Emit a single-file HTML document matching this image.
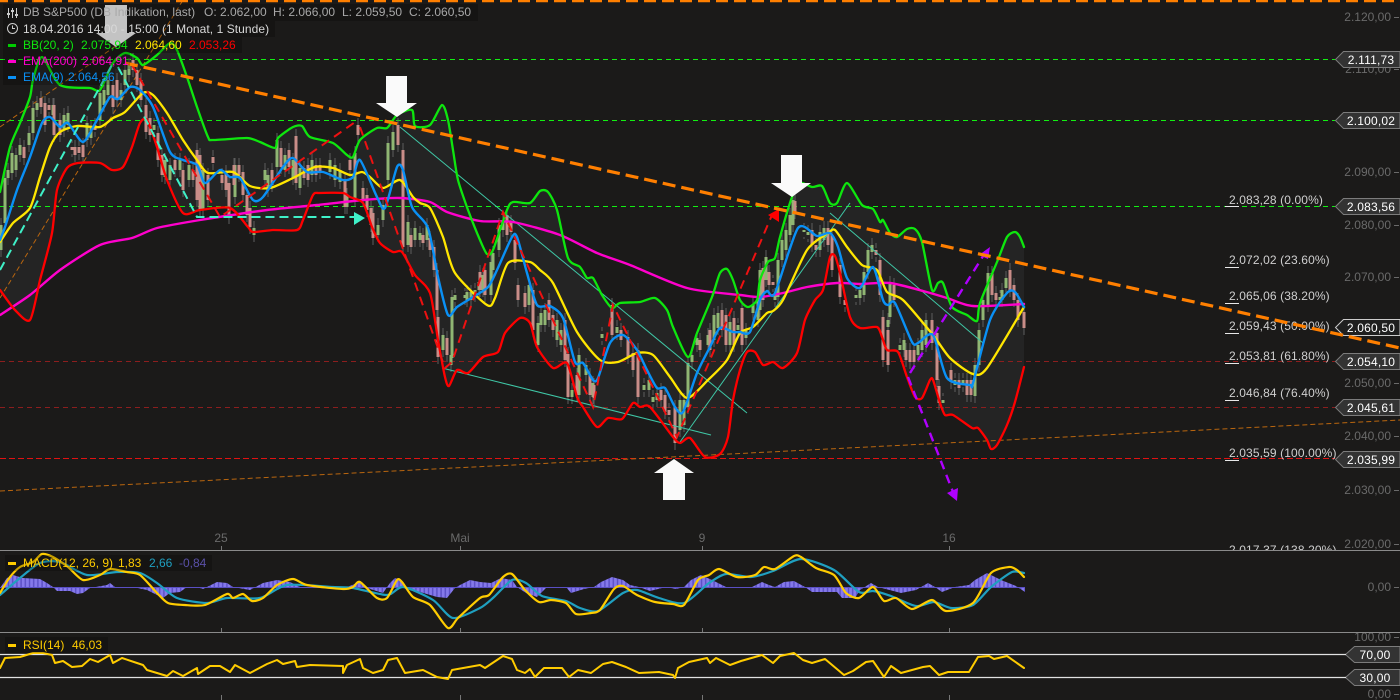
<!DOCTYPE html>
<html><head><meta charset="utf-8"><title>DB S&amp;P500</title>
<style>
html,body{margin:0;padding:0;background:#1b1a19;width:1400px;height:700px;overflow:hidden}
svg{display:block;font-family:"Liberation Sans",sans-serif;font-size:12px}
.ax{fill:#6a6a6a}
.fb{fill:#cfcfcf;letter-spacing:.12px}
.tg{fill:#fff;text-anchor:middle;letter-spacing:.2px}
.tag{fill:#333;stroke:#7c7c7c;stroke-width:1}
.l,.s{fill:none;stroke-linejoin:round;stroke-linecap:round}
</style></head><body>
<svg width="1400" height="700" viewBox="0 0 1400 700" xmlns="http://www.w3.org/2000/svg">
<defs>
<path id="g" d="M1 225V250M5 178V223M8 170V178M12 153V173M16 155V170M20 145V155M29 133V145M33 108V133M37 103V110M53 105V115M64 115V130M68 113V125M87 123V140M91 128V138M100 93V120M104 90V105M108 80V95M121 90V100M125 70V85M129 65V75M154 125V130M165 160V177M170 165V180M180 160V170M189 165V180M203 170V210M235 165V197M254 228V235M265 170V180M268 175V190M277 140V167M285 155V170M293 160V178M300 168V188M312 160V175M330 160V172M335 165V180M340 170V182M347 195V207M355 153V200M378 225V235M383 205V220M388 143V180M393 132V150M408 222V245M415 228V240M420 233V240M427 225V240M443 335V350M451 355V365M452 297V358M455 295V300M465 295V298M467 292V300M471 292V300M475 290V295M479 282V290M483 275V290M491 262V295M493 253V270M499 225V250M503 220V230M529 285V305M538 323V345M541 313V325M545 310V325M557 320V340M561 330V345M572 390V397M579 355V395M586 365V375M593 383V397M602 334V338M617 327V333M644 385V390M649 380V390M653 397V402M657 393V400M680 400V430M684 400V425M688 363V407M692 355V362M697 338V345M708 335V345M714 315V340M718 313V328M730 322V345M738 325V330M746 330V338M753 305V313M758 300V320M760 270V310M766 257V280M775 295V300M778 260V297M782 240V260M786 230V250M790 215V235M793 200V225M804 230V232M808 232V235M820 232V250M824 228V240M856 295V298M860 290V298M864 272V295M868 250V272M872 245V252M888 320V327M890 283V317M900 345V350M904 340V350M918 345V355M922 330V350M926 320V345M943 400V403M955 380V385M963 380V385M975 365V396M979 330V365M983 300V320M988 273V305M1000 297V300M1002 290V300M1006 278V288"/>
<path id="p" d="M24 147V158M41 98V107M45 103V125M49 105V110M54 105V135M60 120V135M72 147V150M75 147V155M79 147V153M83 145V157M95 125V130M113 85V107M117 80V100M133 60V70M137 70V85M141 80V100M146 105V132M150 118V135M158 133V160M162 155V175M175 160V170M183 170V190M193 170V180M197 150V200M200 155V210M208 175V200M213 157V163M222 175V183M226 172V190M229 183V217M234 165V185M239 165V175M243 172V195M247 195V215M250 208V227M272 170V185M281 148V167M289 150V167M296 136V183M304 168V178M308 165V180M316 165V175M320 165V172M345 180V207M350 160V170M355 160V175M358 125V135M363 188V200M367 195V210M371 208V225M373 213V238M398 125V145M403 150V247M411 235V247M423 235V243M430 238V250M434 247V270M437 270V310M438 317V357M447 338V355M480 272V290M485 270V295M507 215V235M511 222V232M515 240V263M518 285V300M525 293V307M533 290V330M549 300V320M553 315V330M565 320V360M568 354V397M577 375V395M590 375V395M594 385V398M612 305V335M621 330V340M628 337V357M633 353V370M638 350V397M661 390V400M665 395V412M669 410V415M675 407V443M700 340V350M710 330V350M722 310V330M726 315V345M734 318V345M742 308V345M763 268V300M769 272V285M773 282V285M795 201V212M812 230V245M816 245V250M828 228V245M832 235V270M840 265V297M845 300V305M876 250V255M880 260V295M883 317V360M888 330V365M894 285V300M906 350V360M910 350V362M914 350V362M932 320V343M937 333V380M939 386V403M951 370V382M959 380V388M967 380V395M971 380V395M992 273V295M996 293V300M1010 270V290M1014 285V300M1018 300V320M1024 312V328"/>
<clipPath id="fibc"><rect x="1200" y="540" width="150" height="10"/></clipPath>
<pattern id="hist" width="4.2" height="40" patternUnits="userSpaceOnUse">
<rect width="4.2" height="40" fill="#5a4fc4"/><rect x=".8" width="2.8" height="40" fill="#8579ea"/>
</pattern>
</defs>

<rect width="1400" height="700" fill="#1b1a19"/>

<!-- BB band -->
<path id="b1" fill="#242424" d="M0 700V192L10 147L20 123L30 97L33 80L42 57L60 85L90 88L100 90L113 63L125 53L137 58L143 65L157 55L170 43L177 50L187 77L197 107L208 137L213 140L247 138L260 142L275 148L278 138L293 127L302 126L310 137L333 143L347 155L353 157L360 140L377 128L387 128L397 115L412 110L415 126L430 125L442 105L448 120L453 150L458 180L468 210L480 240L487 254L493 250L507 210L513 202L530 203L540 191L548 192L557 210L568 258L580 267L587 278L593 278L602 295L612 308L620 303L640 302L655 298L667 310L673 327L688 357L697 333L712 297L720 273L727 269L733 280L740 300L748 307L757 300L760 280L768 262L775 258L780 237L792 197L800 183L812 187L822 186L830 203L837 203L847 183L862 205L873 209L880 222L883 220L890 233L897 237L907 229L915 229L922 242L932 290L938 283L943 283L952 307L967 315L977 321L980 303L997 262L1007 237L1015 232L1020 237L1024 247V700Z"/>
<path id="b2" fill="#1b1a19" d="M0 700V290L15 310L30 320L40 280L52 233L57 190L67 168L78 163L100 163L112 170L123 167L132 147L140 123L147 120L157 147L167 180L183 213L200 210L230 208L248 227L253 232L273 230L297 230L303 220L313 195L320 193L343 193L350 197L363 203L372 227L380 243L393 252L402 252L415 275L430 293L438 340L445 377L449 386L457 370L468 373L483 357L498 352L505 333L520 318L530 323L537 347L553 368L567 363L577 397L583 407L597 427L608 418L622 419L633 403L640 407L650 407L673 437L680 443L690 438L705 457L720 454L728 437L733 400L740 370L747 352L755 352L763 365L773 362L783 368L797 353L805 320L815 300L823 290L830 257L835 256L840 273L850 317L860 328L877 327L882 337L887 350L898 352L907 377L915 397L922 398L930 380L933 380L940 403L945 415L953 415L972 428L978 428L987 440L991 449L997 445L1007 425L1015 402L1024 367V700Z"/>

<!-- horizontal levels -->
<g fill="none" stroke-width="1" stroke-dasharray="5 4">
<path stroke="#12ee12" d="M0 59.5H1335M0 120.5H1335M0 206.5H1335"/>
<path stroke="#8c1e1e" d="M0 361.5H1335M0 407.5H1335"/>
<path stroke="#e01212" stroke-dasharray="6 3" d="M0 458.5H1335"/>
</g>

<!-- thin orange -->
<g fill="none" stroke="#b9660f" stroke-width="1" stroke-dasharray="5 3">
<path d="M0 298L183 0"/><path d="M0 127L130 36"/><path d="M0 491L1400 420"/>
</g>

<!-- candles -->
<use href="#g" y="-7" stroke="#5e5e5e" stroke-width="1"/>
<use href="#g" y="7" stroke="#5e5e5e" stroke-width="1"/>
<use href="#p" y="-7" stroke="#5e5e5e" stroke-width="1"/>
<use href="#p" y="7" stroke="#5e5e5e" stroke-width="1"/>
<use href="#g" stroke="#90b673" stroke-width="3"/>
<use href="#p" stroke="#c98d88" stroke-width="3"/>

<!-- thin cyan channels -->
<g fill="none" stroke="#3fc7a6" stroke-width="1">
<path d="M400 127L747 413"/><path d="M442 368L711 435"/><path d="M680 442L850 203"/><path d="M830 213L983 343"/>
</g>

<!-- indicators -->
<polyline class="s" stroke="#ff00cc" stroke-width="2.4" points="0 315 30 295 60 270 100 245 132 238 157 228 200 220 267 210 317 205 363 200 400 198 430 202 447 212 480 221 513 222 560 235 597 253 630 265 687 288 740 295 760 297 783 293 807 287 837 283 860 284 890 283 923 291 947 298 973 306 1024 304"/>
<polyline class="s" stroke="#ffe600" stroke-width="2.3" points="0 242 13 223 30 208 40 177 50 147 60 132 77 126 100 127 113 118 125 112 143 93 153 95 167 113 183 140 197 160 208 173 233 172 250 186 270 188 293 178 315 167 333 168 350 175 362 172 370 177 383 188 400 180 413 197 420 203 430 208 443 237 455 273 487 305 495 298 508 263 530 262 540 270 553 283 577 332 600 360 618 362 637 353 653 355 670 377 687 398 708 380 727 360 740 333 753 327 767 313 773 311 783 300 807 250 828 233 835 230 847 247 862 265 877 270 887 292 903 300 933 335 950 358 973 374 987 368 1024 307"/>
<polyline id="gl" class="s" stroke="#0ee60e" stroke-width="2.3" points="0 192 10 147 20 123 30 97 33 80 42 57 60 85 90 88 100 90 113 63 125 53 137 58 143 65 157 55 170 43 177 50 187 77 197 107 208 137 213 140 247 138 260 142 275 148 278 138 293 127 302 126 310 137 333 143 347 155 353 157 360 140 377 128 387 128 397 115 412 110 415 126 430 125 442 105 448 120 453 150 458 180 468 210 480 240 487 254 493 250 507 210 513 202 530 203 540 191 548 192 557 210 568 258 580 267 587 278 593 278 602 295 612 308 620 303 640 302 655 298 667 310 673 327 688 357 697 333 712 297 720 273 727 269 733 280 740 300 748 307 757 300 760 280 768 262 775 258 780 237 792 197 800 183 812 187 822 186 830 203 837 203 847 183 862 205 873 209 880 222 883 220 890 233 897 237 907 229 915 229 922 242 932 290 938 283 943 283 952 307 967 315 977 321 980 303 997 262 1007 237 1015 232 1020 237 1024 247"/>
<polyline id="rl" class="s" stroke="#f00" stroke-width="2.3" points="0 290 15 310 30 320 40 280 52 233 57 190 67 168 78 163 100 163 112 170 123 167 132 147 140 123 147 120 157 147 167 180 183 213 200 210 230 208 248 227 253 232 273 230 297 230 303 220 313 195 320 193 343 193 350 197 363 203 372 227 380 243 393 252 402 252 415 275 430 293 438 340 445 377 449 386 457 370 468 373 483 357 498 352 505 333 520 318 530 323 537 347 553 368 567 363 577 397 583 407 597 427 608 418 622 419 633 403 640 407 650 407 673 437 680 443 690 438 705 457 720 454 728 437 733 400 740 370 747 352 755 352 763 365 773 362 783 368 797 353 805 320 815 300 823 290 830 257 835 256 840 273 850 317 860 328 877 327 882 337 887 350 898 352 907 377 915 397 922 398 930 380 933 380 940 403 945 415 953 415 972 428 978 428 987 440 991 449 997 445 1007 425 1015 402 1024 367"/>
<polyline class="s" stroke="#0a90f5" stroke-width="2.4" points="0 240 5 227 17 190 30 157 42 123 50 117 60 127 68 123 83 142 97 120 110 97 118 99 130 87 140 90 153 107 170 152 183 160 197 165 205 183 220 170 230 177 240 178 253 200 263 197 283 167 293 158 307 172 323 172 343 180 353 177 360 160 377 197 385 208 397 167 403 170 412 207 428 228 438 277 448 315 457 307 473 297 488 287 497 270 512 237 517 237 527 273 537 305 550 306 563 318 575 362 583 363 593 380 598 378 610 343 623 335 637 350 647 370 657 388 665 388 675 407 683 412 697 373 710 347 720 328 733 332 740 332 750 332 760 300 767 291 775 293 798 228 817 236 830 233 838 247 847 278 860 288 873 267 883 300 888 305 895 303 912 342 918 343 933 335 947 378 970 385 973 383 990 320 1007 293 1015 292 1024 307"/>

<!-- dashed annotations -->
<g fill="none" stroke="#3ff0c8" stroke-width="2" stroke-dasharray="9 5">
<path d="M0 270L113 63"/><path d="M118 67L197 217H355"/>
</g>
<polygon fill="#3ff0c8" points="354,212 365,218 354,225"/>
<g fill="none" stroke="#ee1111" stroke-width="2" stroke-dasharray="9 6">
<path d="M132 65L220 217L233 208L358 120"/>
<path d="M360 127L445 368L452 362L503 212L593 407L613 305L677 437L772 215"/>
</g>
<polygon fill="#f00" points="768,215 779,209 779,222"/>
<g fill="none" stroke="#b000ff" stroke-width="2.4" stroke-dasharray="9 6">
<path d="M910 373L985 253"/><path d="M908 377L953 492"/>
</g>
<polygon fill="#b000ff" points="979,255 990,247 988,259"/>
<polygon fill="#b000ff" points="947,493 958,488 957,501"/>

<!-- axis labels -->
<g class="ax" text-anchor="end">
<text x="1391" y="21">2.120,00</text><text x="1391" y="73">2.110,00</text><text x="1391" y="176">2.090,00</text><text x="1391" y="229">2.080,00</text><text x="1391" y="281">2.070,00</text><text x="1391" y="387">2.050,00</text><text x="1391" y="440">2.040,00</text><text x="1391" y="494">2.030,00</text><text x="1391" y="548">2.020,00</text><text x="1391" y="591">0,00</text><text x="1391" y="641">100,00</text><text x="1391" y="698">0,00</text>
</g>
<path stroke="#6a6a6a" stroke-width="1" d="M1394 17.5H1399M1394 69.5H1399M1394 120.5H1399M1394 172.5H1399M1394 225.5H1399M1394 277.5H1399M1394 383.5H1399M1394 436.5H1399M1394 490.5H1399M1394 544.5H1399M1394 587.5H1399M1394 637.5H1399M1394 694.5H1399"/>
<g class="ax" text-anchor="middle"><text x="221" y="542">25</text><text x="460" y="542">Mai</text><text x="702" y="542">9</text><text x="949" y="542">16</text></g>
<path stroke="#777" stroke-width="1" d="M221.5 546V550M460.5 546V550M702.5 546V550M949.5 546V550M221.5 628V632M460.5 628V632M702.5 628V632M949.5 628V632M221.5 695V700M460.5 695V700M702.5 695V700M949.5 695V700"/>

<!-- fib labels -->
<g class="fb">
<text x="1229" y="204">2.083,28 (0.00%)</text>
<text x="1229" y="264">2.072,02 (23.60%)</text>
<text x="1229" y="300">2.065,06 (38.20%)</text>
<text x="1229" y="330">2.059,43 (50.00%)</text>
<text x="1229" y="360">2.053,81 (61.80%)</text>
<text x="1229" y="397">2.046,84 (76.40%)</text>
<text x="1229" y="457">2.035,59 (100.00%)</text>
</g>
<g clip-path="url(#fibc)"><text class="fb" x="1229" y="554">2.017,37 (138.20%)</text></g>
<path stroke="#e8e8e8" stroke-width="1" d="M1225 206.5H1239M1225 267.5H1239M1225 303.5H1239M1225 333.5H1239M1225 363.5H1239M1225 400.5H1239M1225 460.5H1239"/>

<!-- price tags -->
<g>
<polygon class="tag" points="1335.5,59.5 1343.5,51.5 1400,51.5 1400,67.5 1343.5,67.5"/>
<polygon class="tag" points="1335.5,120.5 1343.5,112.5 1400,112.5 1400,128.5 1343.5,128.5"/>
<polygon class="tag" points="1335.5,206.5 1343.5,198.5 1400,198.5 1400,214.5 1343.5,214.5"/>
<polygon class="tag" points="1335.5,327.5 1343.5,319.5 1400,319.5 1400,335.5 1343.5,335.5" style="stroke:#ccc;fill:#1f1f1f"/>
<polygon class="tag" points="1335.5,361.5 1343.5,353.5 1400,353.5 1400,369.5 1343.5,369.5"/>
<polygon class="tag" points="1335.5,407.5 1343.5,399.5 1400,399.5 1400,415.5 1343.5,415.5"/>
<polygon class="tag" points="1335.5,459.5 1343.5,451.5 1400,451.5 1400,467.5 1343.5,467.5"/>
<polygon class="tag" points="1345.5,654.5 1354.5,646.5 1400,646.5 1400,662.5 1354.5,662.5"/>
<polygon class="tag" points="1345.5,677.5 1354.5,669.5 1400,669.5 1400,685.5 1354.5,685.5"/>
</g>
<g class="tg">
<text x="1371" y="64">2.111,73</text><text x="1371" y="125">2.100,02</text><text x="1371" y="211">2.083,56</text><text x="1371" y="332">2.060,50</text><text x="1371" y="366">2.054,10</text><text x="1371" y="412">2.045,61</text><text x="1371" y="464">2.035,99</text><text x="1375" y="659">70,00</text><text x="1375" y="682">30,00</text>
</g>

<!-- orange trend + top line -->
<path fill="none" stroke="#ff7f00" stroke-width="3.2" stroke-dasharray="13 6" d="M125 63L1400 348"/>
<path fill="none" stroke="#ff7f00" stroke-width="2.5" stroke-dasharray="12 6" d="M-4 1H1400"/>

<!-- white arrows -->
<g fill="#fafafa">
<polygon points="105,5 127,5 127,33 136,33 116,47 96,33 105,33"/>
<polygon points="386,76 407,76 407,103 417,103 397,117 376,103 386,103"/>
<polygon points="781,155 802,155 802,183 811,183 792,197 771,183 781,183"/>
<polygon points="674,459 694,473 685,473 685,500 663,500 663,473 654,473"/>
</g>

<!-- panel separators -->
<path stroke="#8a8a8a" stroke-width="1" d="M0 550.5H1400M0 632.5H1400"/>

<!-- MACD -->
<polygon fill="url(#hist)" points="0 587 0 588 7 578 13 575 23 578 40 579 47 583 53 587 57 591 70 591 77 594 83 593 90 588 107 585 110 583 115 587 133 587 147 590 157 595 163 598 170 593 180 592 187 587 197 587 203 589 217 582 227 583 233 587 250 590 263 583 277 580 290 582 300 587 320 587 347 587 360 582 367 588 383 593 390 583 395 578 400 580 405 587 420 592 437 597 447 598 455 588 460 585 470 580 480 582 491 583 501 578 512 580 517 587 526 593 537 597 546 588 566 587 571 593 584 589 594 587 601 582 612 577 623 580 630 585 639 587 650 591 666 587 676 589 684 587 691 580 701 575 712 580 726 587 750 588 762 582 769 585 775 587 784 582 794 581 805 587 812 592 837 592 842 598 855 598 860 590 871 583 878 587 901 593 916 590 928 583 935 587 942 592 955 587 969 585 975 580 987 573 1001 580 1016 586 1025 592 1025 587"/>
<path stroke="#5a4fc4" stroke-width="1" d="M0 587.5H1025"/>
<polyline class="s" stroke="#1fa0c0" stroke-width="2.2" points="0 595 20 578 40 563 60 562 87 575 117 572 140 573 157 583 177 598 207 603 227 598 260 598 287 585 333 587 353 588 387 595 403 587 433 600 453 618 480 608 494 597 512 580 526 583 542 596 566 601 580 608 598 611 623 593 637 590 659 598 684 603 709 583 726 574 751 577 773 571 801 559 834 570 859 592 873 591 891 596 916 606 934 602 951 608 973 605 991 587 1012 572 1024 573"/>
<polyline class="s" stroke="#ffcc00" stroke-width="2.2" points="0 593 10 577 20 567 33 562 42 554 53 557 68 567 83 580 100 575 110 569 127 572 140 575 157 593 168 603 185 605 205 605 227 594 233 598 243 594 252 601 263 598 277 585 293 579 307 585 343 589 353 587 360 582 377 598 387 598 397 580 402 582 413 597 430 605 448 628 458 618 480 598 489 595 503 577 512 574 525 590 539 602 551 600 566 603 576 614 591 613 600 610 614 589 623 586 637 595 655 602 673 604 684 605 698 580 709 575 719 569 737 577 755 575 764 567 775 569 794 556 801 557 816 568 834 575 846 593 859 598 873 587 884 601 896 598 912 609 932 600 946 611 973 603 991 573 1009 567 1017 570 1024 577"/>

<!-- RSI -->
<path stroke="#e2e2e2" stroke-width="1.2" d="M0 654.5H1346M0 677.5H1346"/>
<polyline class="l" stroke="#ffcc00" stroke-width="2" points="0 668 5 658 20 657 33 653 43 653 52 655 55 663 63 661 72 667 82 666 90 659 98 662 110 655 113 663 122 658 143 665 147 670 167 676 173 671 183 676 197 668 198 674 210 666 220 666 230 672 235 665 250 673 267 664 277 660 283 664 295 661 297 667 310 665 343 666 343 673 347 665 360 659 363 668 373 673 383 670 388 660 397 658 405 673 423 670 437 677 448 679 452 670 480 665 485 668 503 656 512 659 517 670 525 673 530 669 535 677 544 668 562 668 569 677 578 670 591 673 603 664 612 662 626 667 639 673 659 672 673 675 675 678 678 668 689 662 707 658 710 663 716 658 730 665 741 661 762 655 773 663 780 656 794 653 803 660 812 663 825 659 844 675 853 671 866 662 873 661 884 677 891 666 901 673 923 667 930 666 939 675 948 672 969 672 978 657 989 656 994 659 1007 656 1024 668"/>

<!-- legend backgrounds -->
<g fill="#000" fill-opacity=".22">
<rect x="3" y="4" width="475" height="17"/><rect x="3" y="21" width="272" height="16"/><rect x="3" y="37" width="239" height="16"/><rect x="3" y="53" width="127" height="16"/><rect x="3" y="69" width="112" height="16"/>
<rect x="5" y="555" width="207" height="16"/><rect x="5" y="637" width="103" height="16"/>
</g>

<!-- legend -->
<g fill="none" stroke="#ccc" stroke-width="1">
<path d="M8.5 8V18M12.5 8V18M16.5 8V18"/>
<circle cx="12.5" cy="28.5" r="5"/><path d="M12.5 25.5V28.5H15"/>
</g>
<path fill="#ccc" d="M7 13h3v2H7zM11 10h3v2h-3zM15 14h3v2h-3z"/>
<text x="23" y="16" fill="#a8a8a8">DB S&amp;P500 (DB Indikation, last)</text>
<text x="204" y="16" fill="#a8a8a8">O: 2.062,00</text>
<text x="273" y="16" fill="#a8a8a8">H: 2.066,00</text>
<text x="342" y="16" fill="#a8a8a8">L: 2.059,50</text>
<text x="409" y="16" fill="#a8a8a8">C: 2.060,50</text>
<text x="23" y="33" fill="#d8d8d8" letter-spacing=".06">18.04.2016 14:00 - 15:00 (1 Monat, 1 Stunde)</text>
<rect x="8" y="44" width="8" height="3" fill="#0c0"/>
<text x="23" y="49" fill="#0ee60e">BB(20, 2)</text><text x="81" y="49" fill="#0ee60e">2.075,94</text><text x="135" y="49" fill="#ffe600">2.064,60</text><text x="189" y="49" fill="#f00">2.053,26</text>
<rect x="8" y="60" width="8" height="3" fill="#f0c"/>
<text x="23" y="65" fill="#ff00cc">EMA(200)</text><text x="82" y="65" fill="#ff00cc">2.064,91</text>
<rect x="8" y="76" width="8" height="3" fill="#0a90f5"/>
<text x="23" y="81" fill="#0a90f5">EMA(9)</text><text x="68" y="81" fill="#0a90f5">2.064,56</text>

<rect x="8" y="562" width="8" height="3" fill="#ffcc00"/>
<text x="23" y="567" fill="#ffcc00">MACD(12, 26, 9)</text><text x="118" y="567" fill="#ffcc00">1,83</text><text x="149" y="567" fill="#1f9fc0">2,66</text><text x="179" y="567" fill="#5a50a8">-0,84</text>
<rect x="8" y="644" width="8" height="3" fill="#ffcc00"/>
<text x="23" y="649" fill="#ffcc00">RSI(14)</text><text x="72" y="649" fill="#ffcc00">46,03</text>
</svg>
<script>
(function(){
var NS='http://www.w3.org/2000/svg',T=0.75;
function curve(el){
  var n=el.getAttribute('points').trim().split(/\s+/).map(Number),p=[],i;
  for(i=0;i<n.length;i+=2)p.push([n[i],n[i+1]]);
  var d='';
  for(i=0;i<p.length-1;i++){
    var a=p[i-1]||p[i],b=p[i],c=p[i+1],e=p[i+2]||c;
    var x1=b[0]+(c[0]-a[0])/6*T,y1=b[1]+(c[1]-a[1])/6*T,x2=c[0]-(e[0]-b[0])/6*T,y2=c[1]-(e[1]-b[1])/6*T;
    d+='C'+x1.toFixed(1)+' '+y1.toFixed(1)+' '+x2.toFixed(1)+' '+y2.toFixed(1)+' '+c[0]+' '+c[1];
  }
  return {s:p[0],d:d};
}
var b={gl:'b1',rl:'b2'};
Array.prototype.slice.call(document.querySelectorAll('polyline.s')).forEach(function(el){
  var c=curve(el),q=document.createElementNS(NS,'path');
  q.setAttribute('class','s');
  q.setAttribute('stroke',el.getAttribute('stroke'));
  q.setAttribute('stroke-width',el.getAttribute('stroke-width'));
  q.setAttribute('d','M'+c.s[0]+' '+c.s[1]+c.d);
  if(b[el.id])document.getElementById(b[el.id]).setAttribute('d','M0 700L'+c.s[0]+' '+c.s[1]+c.d+'V700Z');
  el.parentNode.replaceChild(q,el);
});
})();
</script>
</body></html>
